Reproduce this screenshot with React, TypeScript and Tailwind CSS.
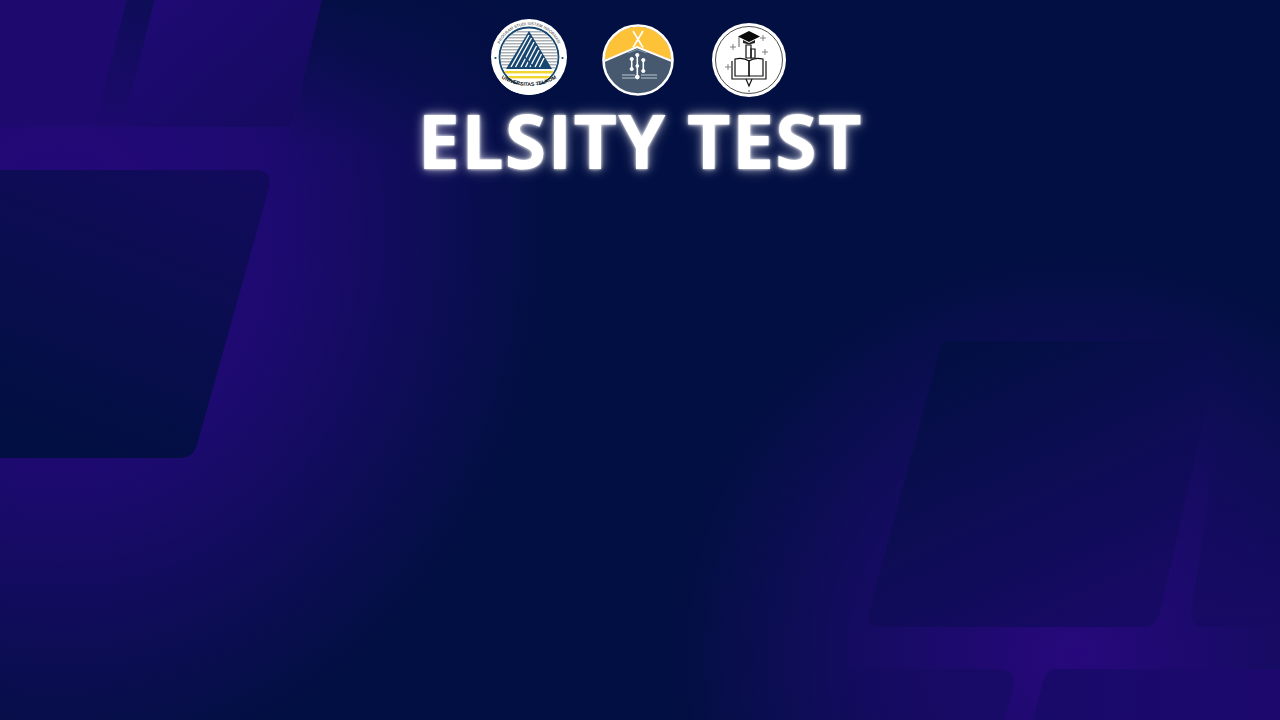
const BackgroundShapes = () => (
  <svg className="absolute inset-0 h-full w-full" viewBox="0 0 1280 720" fill="none">
    <defs>
      <radialGradient id="glowLeft" gradientUnits="userSpaceOnUse" cx="0" cy="0" r="1" gradientTransform="translate(60 230) scale(490 540)">
        <stop offset="0" stopColor="#25087a" />
        <stop offset="0.45" stopColor="#1d0a70" />
        <stop offset="1" stopColor="#1d0a70" stopOpacity="0" />
      </radialGradient>
      <radialGradient id="glowRight" gradientUnits="userSpaceOnUse" cx="0" cy="0" r="1" gradientTransform="translate(1075 655) scale(400 400)">
        <stop offset="0" stopColor="#27087c" />
        <stop offset="0.45" stopColor="#180b66" />
        <stop offset="1" stopColor="#180b66" stopOpacity="0" />
      </radialGradient>
      <linearGradient id="shapeLeft" x1="230" y1="170" x2="120" y2="458" gradientUnits="userSpaceOnUse">
        <stop offset="0" stopColor="#120b5c" />
        <stop offset="1" stopColor="#020f42" />
      </linearGradient>
      <linearGradient id="shapeRight" x1="960" y1="341" x2="1090" y2="627" gradientUnits="userSpaceOnUse">
        <stop offset="0" stopColor="#020f42" />
        <stop offset="1" stopColor="#170a64" />
      </linearGradient>
      <linearGradient id="shapeFar" x1="1240" y1="385" x2="1240" y2="627" gradientUnits="userSpaceOnUse">
        <stop offset="0" stopColor="#0a0e50" stopOpacity="0.1" />
        <stop offset="1" stopColor="#170a64" />
      </linearGradient>
      <linearGradient id="shapeBottom" x1="860" y1="669" x2="1280" y2="720" gradientUnits="userSpaceOnUse">
        <stop offset="0" stopColor="#110b5a" stopOpacity="0.4" />
        <stop offset="0.5" stopColor="#190a6a" />
        <stop offset="1" stopColor="#1d096e" />
      </linearGradient>
      <linearGradient id="bandTop" x1="140" y1="0" x2="110" y2="125" gradientUnits="userSpaceOnUse">
        <stop offset="0" stopColor="#0e0d58" />
        <stop offset="0.55" stopColor="#160b64" />
        <stop offset="1" stopColor="#1c0a6c" />
      </linearGradient>
      <linearGradient id="shapeTopRight" x1="170" y1="0" x2="290" y2="127" gradientUnits="userSpaceOnUse">
        <stop offset="0" stopColor="#1e0a72" />
        <stop offset="1" stopColor="#150a60" />
      </linearGradient>
      <linearGradient id="edgeTop" x1="400" y1="0" x2="400" y2="150" gradientUnits="userSpaceOnUse">
        <stop offset="0" stopColor="#020f42" stopOpacity="0.85" />
        <stop offset="1" stopColor="#020f42" stopOpacity="0" />
      </linearGradient>
      <clipPath id="outerDisc">
        <circle cx="38" cy="38" r="38" />
      </clipPath>
      <clipPath id="innerDisc">
        <circle cx="38" cy="38" r="28.5" />
      </clipPath>
      <clipPath id="compassDisc">
        <circle cx="36" cy="36" r="33.5" />
      </clipPath>
    </defs>
    <rect width="1280" height="720" fill="url(#glowLeft)" />
    <rect width="1280" height="720" fill="url(#glowRight)" />
    <path d="M323 -5H700V150H287Z" fill="url(#edgeTop)" />
    <path d="M128 -5H158L126 114Q124 122 128 127H92Q96 122 97 115Z" fill="url(#bandTop)" />
    <path d="M-10 -5H128L97 115Q94 127 82 127H-10Z" fill="#1e0a6f" />
    <path d="M156 -5H323L291 127H138Q123 127 126 114Z" fill="url(#shapeTopRight)" />
    <path d="M-10 170H255Q273 170 269 188L197 445Q193 458 180 458H-10Z" fill="url(#shapeLeft)" />
    <path d="M950 341H1222L1160 612Q1155 627 1145 627H880Q865 627 869 612L940 350Q942 341 950 341Z" fill="url(#shapeRight)" />
    <path d="M1225 385H1290V627H1205Q1188 627 1192 608Z" fill="url(#shapeFar)" />
    <path d="M850 669H995Q1016 669 1013 686L1002 730H830Z" fill="url(#shapeBottom)" />
    <path d="M1056 669H1290V730H1030L1043 682Q1046 669 1056 669Z" fill="url(#shapeBottom)" />
  </svg>
);

const ProgramLogo = () => (
  <svg width="76" height="76" viewBox="0 0 76 76">
    <defs>
      <path id="topArc" d="M6 38A32 32 0 0 1 70 38" />
      <path id="bottomArc" d="M2 54Q38 80 74 54" />
    </defs>
    <circle cx="38" cy="38" r="38" fill="#fff" />
    <circle cx="38" cy="38" r="29.5" fill="none" stroke="#174670" strokeWidth="1.8" />
    <g clipPath="url(#innerDisc)">
      {[12, 15, 18, 21, 24, 27, 30, 33, 36, 39, 42, 45, 48].map((y) => (
        <rect key={y} x="6" y={y} width="64" height="1.5" fill="#a9b0b6" />
      ))}
      <rect x="6" y="50" width="64" height="14" fill="#fff" />
      <rect x="6" y="52" width="64" height="2.4" fill="#f2d52e" />
      <rect x="6" y="57" width="64" height="2.4" fill="#f2d52e" />
    </g>
    <path d="M38 12L61 50H15Z" fill="#174670" />
    <g stroke="#fff" strokeWidth="1.4" fill="none">
      <path d="M38 16L20 48" />
      <path d="M40.5 19L24.5 48" />
      <path d="M43 23L30 48" />
      <path d="M45.5 27L34.5 48" />
      <path d="M48 31L39 48" />
      <path d="M50.5 35L44 48" />
      <path d="M53 39L48.5 48" />
    </g>
    <path d="M32 36L43 49" stroke="#174670" strokeWidth="1.4" />
    <g clipPath="url(#outerDisc)">
      <path d="M4 60Q38 72 72 60V76H4Z" fill="#fff" />
    </g>
    <text fontFamily="Liberation Sans, sans-serif" fontSize="4" fill="#333">
      <textPath href="#topArc" startOffset="50%" textAnchor="middle">PROGRAM STUDI SISTEM INFORMASI</textPath>
    </text>
    <text fontFamily="Liberation Sans, sans-serif" fontSize="5.2" fontWeight="700" fill="#111">
      <textPath href="#bottomArc" startOffset="50%" textAnchor="middle">UNIVERSITAS TELKOM</textPath>
    </text>
    <circle cx="4.5" cy="39" r="1.1" fill="#174670" />
    <circle cx="71.5" cy="39" r="1.1" fill="#174670" />
  </svg>
);

const CompassLogo = () => (
  <svg width="72" height="72" viewBox="0 0 72 72">
    <g clipPath="url(#compassDisc)">
      <rect width="72" height="72" fill="#46596f" />
      <path d="M0 0H72V37L35 23L0 37Z" fill="#fdc237" />
      <path d="M0 38L35 23L72 38" fill="none" stroke="#fff" strokeWidth="2" />
    </g>
    <circle cx="36" cy="36" r="34.5" fill="none" stroke="#fff" strokeWidth="2.6" />
    <path d="M31 7L41 23.5M41 7L31 23.5" fill="none" stroke="#fff" strokeWidth="1.6" />
    <path d="M26 29L35 25.5L45 29" fill="none" stroke="#8a9aac" strokeWidth="1" />
    <g fill="#fff" stroke="#fff">
      <path d="M29.7 34V45" strokeWidth="1.6" />
      <path d="M35.3 30V54" strokeWidth="1.6" />
      <path d="M41.3 35V47" strokeWidth="1.6" />
      <circle cx="29.7" cy="35" r="1.6" />
      <circle cx="29.7" cy="45" r="1.6" />
      <circle cx="35.3" cy="31" r="1.6" />
      <circle cx="35.3" cy="42" r="1.4" />
      <circle cx="35.3" cy="53" r="1.9" />
      <circle cx="41.3" cy="36" r="1.6" />
      <circle cx="41.3" cy="47" r="1.6" />
    </g>
    <path d="M20 51H33M39 51H55M20 54H33M39 54H55" stroke="#94a2b2" strokeWidth="1.4" />
  </svg>
);

const BookLogo = () => (
  <svg width="74" height="74" viewBox="0 0 74 74">
    <circle cx="37" cy="37" r="37" fill="#fff" />
    <circle cx="37" cy="37" r="33.5" fill="none" stroke="#222" strokeWidth="0.8" />
    <path d="M37 8L48 13.5L37 19L26 13.5Z" fill="#0a0a0a" />
    <path d="M31 17V20L37 21.5L43 20V17L37 20Z" fill="#222" />
    <path d="M27 14V24" stroke="#333" strokeWidth="0.8" />
    <g fill="none" stroke="#111" strokeWidth="1.2">
      <path d="M34 22H39V35H34Z" />
      <path d="M39 26H43V35H39Z" />
      <path d="M23 36V53H37V38C33 35 27 35 23 36Z" />
      <path d="M51 36V53H37V38C41 35 47 35 51 36Z" />
      <path d="M20 38V56H54V38" />
      <path d="M34 56L37 63L40 56" />
    </g>
    <g stroke="#555" strokeWidth="0.7">
      <path d="M18 24H24M21 21V27" />
      <path d="M50 29H56M53 26V32" />
      <path d="M13 44H19M16 41V47" />
      <path d="M48 15H54M51 12V18" />
    </g>
    <circle cx="37" cy="68" r="0.7" fill="#222" />
  </svg>
);

export default function App() {
  return (
    <div className="relative h-screen w-full overflow-hidden bg-[#020f42]">
      <BackgroundShapes />
      <div className="relative flex flex-col items-center pt-[19px]">
        <div className="flex items-start pr-[3px]">
          <ProgramLogo />
          <div className="mt-[5px] ml-[35px]">
            <CompassLogo />
          </div>
          <div className="mt-[4px] ml-[38px]">
            <BookLogo />
          </div>
        </div>
        <h1 className="mt-[-3px] font-['Open_Sans',sans-serif] text-[76px] leading-[92px] font-bold tracking-[0.8px] text-white [text-shadow:0_0_3px_#fff,0_0_8px_#ffffffa0,0_0_16px_#ffffff50]">
          ELSITY TEST
        </h1>
      </div>
    </div>
  );
}
